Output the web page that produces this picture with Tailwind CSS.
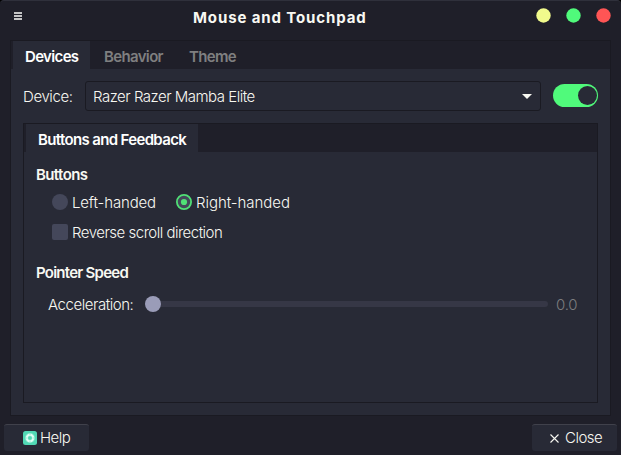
<!DOCTYPE html>
<html lang="en"><head><meta charset="utf-8"><title>Mouse and Touchpad</title>
<script src="https://cdn.jsdelivr.net/npm/@tailwindcss/browser@4"></script></head>
<body class="bg-black">
<div class="w-[621px] h-[455px] flex flex-col overflow-hidden rounded-t-[4px] bg-[#1f1f29] border-t border-[#2f303b] font-['Inter',sans-serif] font-light text-[15px] leading-[20px] tracking-[-0.5px] text-[#f8f8f2] whitespace-nowrap">
  <header class="h-[39px] shrink-0 flex items-start justify-between pl-[14px] pr-[10.5px]">
    <svg class="w-[8px] h-[8px] mt-[11px]" viewBox="0 0 8 8" fill="#c4c4c5"><path d="M0 0h8v2H0zM0 3h8v2H0zM0 6h8v2H0z"/></svg>
    <h1 class="ml-[171px] mr-auto mt-[7px] font-bold tracking-[0.88px]">Mouse and Touchpad</h1>
    <svg class="w-[75px] h-[15px] mt-[7px]" viewBox="0 0 75 15"><circle cx="7.5" cy="7.5" r="7.2" fill="#f1fa8c"/><circle cx="37.5" cy="7.5" r="7.2" fill="#50fa7b"/><circle cx="67.5" cy="7.5" r="7.2" fill="#ff5555"/></svg>
  </header>
  <main class="ml-[10px] w-[601px] h-[376px] shrink-0 flex flex-col border border-[#1a1a22] bg-[#282a36]">
    <nav class="h-[28px] shrink-0 flex bg-[#1f1f29] pl-[2px] font-semibold tracking-[-0.65px] text-[#7f7f80]">
      <span class="w-[77px] pl-[12px] pt-[6px] bg-[#282a36] text-[#fff] tracking-[-0.65px]">Devices</span>
      <span class="w-[85px] pl-[14px] pt-[6px]">Behavior</span>
      <span class="pl-[14px] pt-[6px]">Theme</span>
    </nav>
    <div class="flex h-[30px] mt-[12px] pl-[12px] pr-[11px] items-center shrink-0">
      <span class="w-[62px] pt-[2px] tracking-[-0.4px]">Device:</span>
      <div class="w-[456px] h-[30px] border border-[#1a1a22] rounded-[3px] flex items-center justify-between pl-[7px] pr-[8px]"><span class="pt-[2px]">Razer Razer Mamba Elite</span>
        <svg class="w-[10px] h-[5px]" viewBox="0 0 10 5"><path d="M0 0h10L5 5z" fill="#f8f8f2"/></svg></div>
      <div class="ml-[12px] mb-[1px] w-[45px] h-[23px] rounded-full bg-[#50fa7b] flex items-center justify-end pr-[1px]"><i class="size-[19px] rounded-full bg-[#282a36]"></i></div>
    </div>
    <section class="ml-[12px] mt-[12px] w-[575px] h-[280px] shrink-0 border border-[#1a1a22] flex flex-col">
      <div class="h-[28px] shrink-0 bg-[#1f1f29] pl-[2px] flex"><span class="w-[172px] pl-[12px] pt-[6px] bg-[#282a36] font-semibold tracking-[-0.65px] text-white">Buttons and Feedback</span></div>
      <h2 class="ml-[12px] mt-[13px] font-semibold tracking-[-0.6px]">Buttons</h2>
      <div class="flex items-center h-[20px] mt-[7px] ml-[28px]">
        <i class="size-[16px] rounded-full bg-[#44475a] mr-[4px]"></i><span class="w-[104px] pt-[2px] tracking-[-0.15px]">Left-handed</span>
        <svg class="size-[16px] mr-[4px]" viewBox="0 0 16 16"><circle cx="8" cy="8" r="7.1" fill="#44475a" stroke="#50e076" stroke-width="1.8"/><circle cx="8" cy="8" r="3.1" fill="#50e076"/></svg><span class="pt-[2px] tracking-[-0.05px]">Right-handed</span>
      </div>
      <div class="flex items-center h-[20px] mt-[10px] ml-[28px]"><i class="size-[16px] rounded-[2px] bg-[#44475a] mr-[4px]"></i><span class="pt-[2px]">Reverse scroll direction</span></div>
      <h2 class="ml-[12px] mt-[21px] font-semibold tracking-[-0.75px]">Pointer Speed</h2>
      <div class="flex items-center h-[20px] mt-[11px] ml-[24px]"><span class="w-[97px] pt-[2px] tracking-[-0.45px]">Acceleration:</span><i class="size-[16px] rounded-full bg-[#9a9cb8]"></i><i class="w-[387px] h-[6px] rounded-r-full bg-[#363746]"></i><span class="ml-[8px] pt-[2px] tracking-[-0.2px] text-[#7c7c7f]">0.0</span></div>
    </section>
  </main>
  <footer class="flex justify-between px-[4px] pt-[8px]">
    <button class="w-[85px] h-[27px] rounded-[3px] bg-[#282a36] border-t border-[#40414b] flex items-center pl-[19px]">
      <svg class="size-[14px] mr-[3px]" viewBox="0 0 14 14"><rect width="14" height="14" rx="2.5" fill="#51d9b5"/><circle cx="7" cy="7" r="4.9" fill="#8ceacf"/><circle cx="7" cy="7" r="3.2" fill="none" stroke="#e0fff6" stroke-width="2"/><path d="M7 2v2.5M7 9.5V12M2 7h2.5M9.5 7H12" stroke="#8ceacf" stroke-width=".8"/><circle cx="7" cy="7" r="1.8" fill="#51d9b5"/></svg>Help</button>
    <button class="w-[85px] h-[27px] rounded-[3px] bg-[#282a36] border-t border-[#40414b] flex items-center pl-[18px]">
      <svg class="size-[9px] mr-[6px]" viewBox="0 0 9 9"><path d="M.5.5l8 8M8.5.5l-8 8" stroke="#f8f8f2" stroke-width="1.1"/></svg>Close</button>
  </footer>
</div>
</body></html>
